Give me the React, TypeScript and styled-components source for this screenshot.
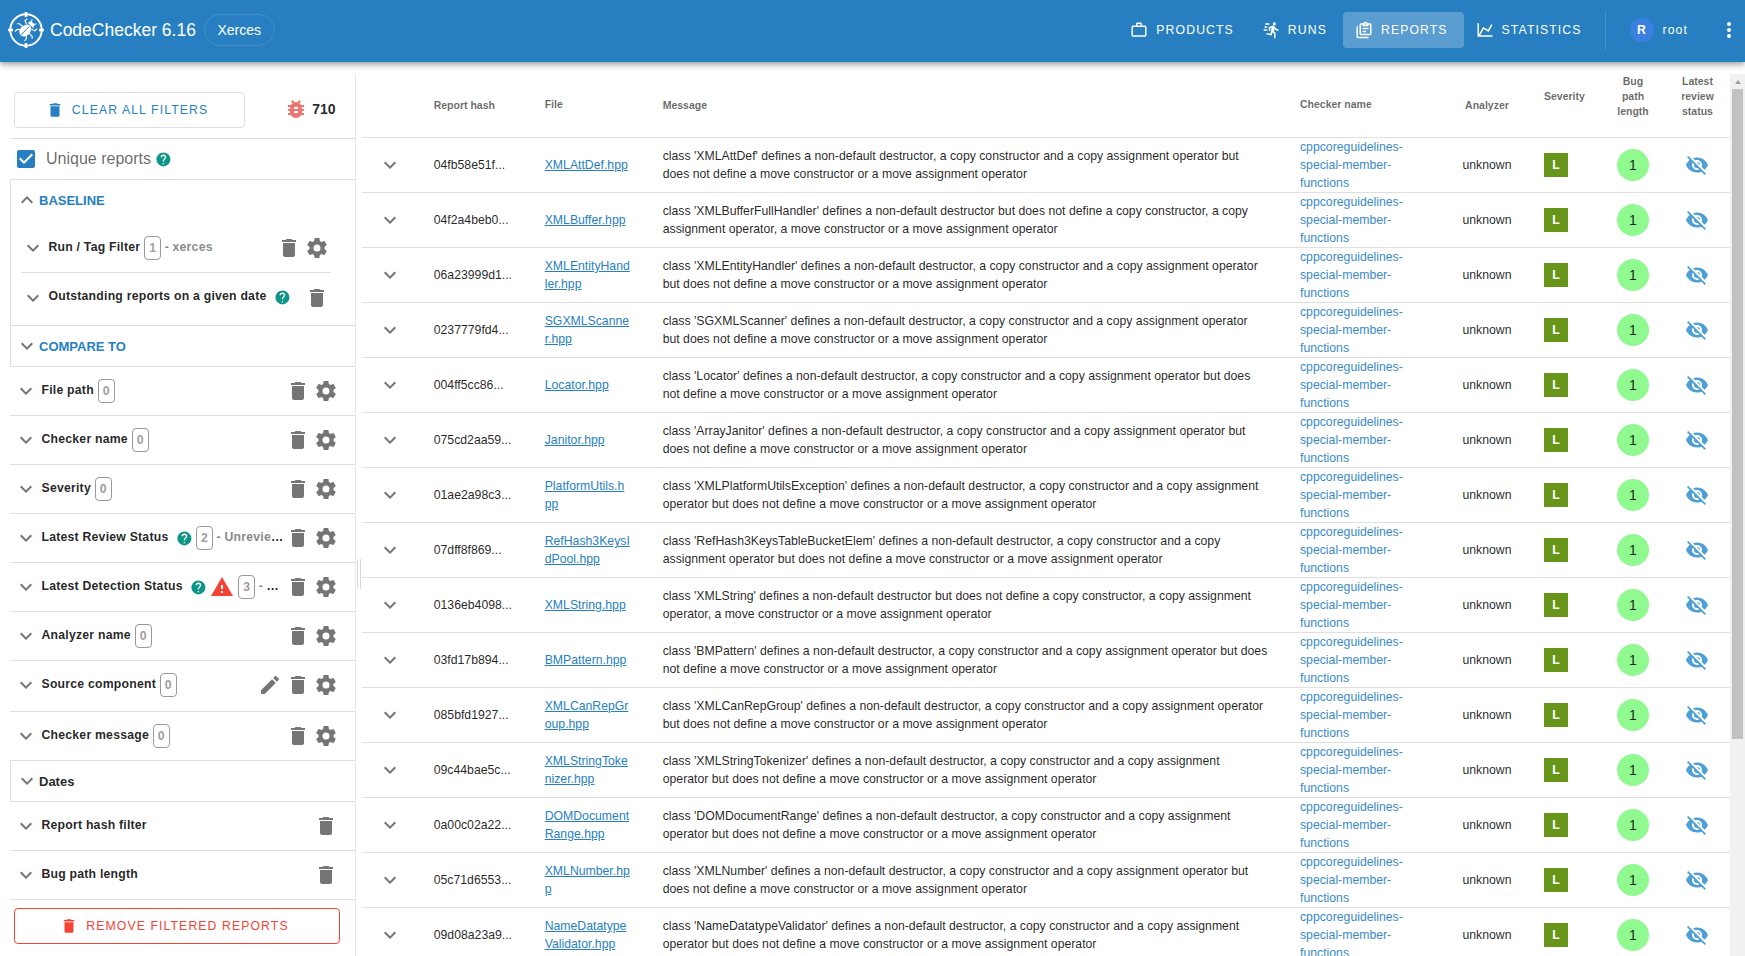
import React from 'react';
import styled, { createGlobalStyle } from 'styled-components';

const color = {
  primary: '#277fc1',
  error: '#f44336',
  teal: '#0d9687',
  line: '#e0e0e0',
  icon: '#757575',
  text: 'rgba(0, 0, 0, 0.87)',
};

const paths = {
  trash: 'M19,4H15.5L14.5,3H9.5L8.5,4H5V6H19M6,19A2,2 0 0,0 8,21H16A2,2 0 0,0 18,19V7H6V19Z',
  cog: 'M12,15.5A3.5,3.5 0 0,1 8.5,12A3.5,3.5 0 0,1 12,8.5A3.5,3.5 0 0,1 15.5,12A3.5,3.5 0 0,1 12,15.5M19.43,12.97C19.47,12.65 19.5,12.33 19.5,12C19.5,11.67 19.47,11.34 19.43,11L21.54,9.37C21.73,9.22 21.78,8.95 21.66,8.73L19.66,5.27C19.54,5.05 19.27,4.96 19.05,5.05L16.56,6.05C16.04,5.66 15.5,5.32 14.87,5.07L14.5,2.42C14.46,2.18 14.25,2 14,2H10C9.75,2 9.54,2.18 9.5,2.42L9.13,5.07C8.5,5.32 7.96,5.66 7.44,6.05L4.95,5.05C4.73,4.96 4.46,5.05 4.34,5.27L2.34,8.73C2.21,8.95 2.27,9.22 2.46,9.37L4.57,11C4.53,11.34 4.5,11.67 4.5,12C4.5,12.33 4.53,12.65 4.57,12.97L2.46,14.63C2.27,14.78 2.21,15.05 2.34,15.27L4.34,18.73C4.46,18.95 4.73,19.03 4.95,18.95L7.44,17.94C7.96,18.34 8.5,18.68 9.13,18.93L9.5,21.58C9.54,21.82 9.75,22 10,22H14C14.25,22 14.46,21.82 14.5,21.58L14.87,18.93C15.5,18.67 16.04,18.34 16.56,17.94L19.05,18.95C19.27,19.03 19.54,18.95 19.66,18.73L21.66,15.27C21.78,15.05 21.73,14.78 21.54,14.63L19.43,12.97Z',
  down: 'M7.41,8.58L12,13.17L16.59,8.58L18,10L12,16L6,10L7.41,8.58Z',
  up: 'M7.41,15.41L12,10.83L16.59,15.41L18,14L12,8L6,14L7.41,15.41Z',
  help: 'M15.07,11.25L14.17,12.17C13.45,12.89 13,13.5 13,15H11V14.5C11,13.39 11.45,12.39 12.17,11.67L13.41,10.41C13.78,10.05 14,9.55 14,9C14,7.89 13.1,7 12,7A2,2 0 0,0 10,9H8A4,4 0 0,1 12,5A4,4 0 0,1 16,9C16,9.88 15.64,10.67 15.07,11.25M13,19H11V17H13M12,2A10,10 0 0,0 2,12A10,10 0 0,0 12,22A10,10 0 0,0 22,12C22,6.47 17.5,2 12,2Z',
  alert: 'M13,14H11V10H13M13,18H11V16H13M1,21H23L12,2L1,21Z',
  bug: 'M14,12H10V10H14M14,16H10V14H14M20,8H17.19C16.74,7.22 16.12,6.55 15.37,6.04L17,4.41L15.59,3L13.42,5.17C12.96,5.06 12.5,5 12,5C11.5,5 11.04,5.06 10.59,5.17L8.41,3L7,4.41L8.62,6.04C7.88,6.55 7.26,7.22 6.81,8H4V10H6.09C6.04,10.33 6,10.66 6,11V12H4V14H6V15C6,15.34 6.04,15.67 6.09,16H4V18H6.81C7.85,19.79 9.78,21 12,21C14.22,21 16.15,19.79 17.19,18H20V16H17.91C17.96,15.67 18,15.34 18,15V14H20V12H18V11C18,10.66 17.96,10.33 17.91,10H20V8Z',
  checkbox: 'M10,17L5,12L6.41,10.58L10,14.17L17.59,6.58L19,8M19,3H5C3.89,3 3,3.89 3,5V19A2,2 0 0,0 5,21H19A2,2 0 0,0 21,19V5C21,3.89 20.1,3 19,3Z',
  pencil: 'M20.71,7.04C21.1,6.65 21.1,6 20.71,5.63L18.37,3.29C18,2.9 17.35,2.9 16.96,3.29L15.12,5.12L18.87,8.87M3,17.25V21H6.75L17.81,9.93L14.06,6.18L3,17.25Z',
  eyeOff: 'M11.83,9L15,12.16C15,12.11 15,12.05 15,12A3,3 0 0,0 12,9C11.94,9 11.89,9 11.83,9M7.53,9.8L9.08,11.35C9.03,11.56 9,11.77 9,12A3,3 0 0,0 12,15C12.22,15 12.44,14.97 12.65,14.92L14.2,16.47C13.53,16.8 12.79,17 12,17A5,5 0 0,1 7,12C7,11.21 7.2,10.47 7.53,9.8M2,4.27L4.28,6.55L4.73,7C3.08,8.3 1.78,10 1,12C2.73,16.39 7,19.5 12,19.5C13.55,19.5 15.03,19.2 16.38,18.66L16.81,19.08L19.73,22L21,20.73L3.27,3M12,7A5,5 0 0,1 17,12C17,12.64 16.87,13.26 16.64,13.82L19.57,16.75C21.07,15.5 22.27,13.86 23,12C21.27,7.61 17,4.5 12,4.5C10.6,4.5 9.26,4.75 8,5.2L10.17,7.35C10.74,7.13 11.35,7 12,7Z',
  briefcase: 'M20,6C20.58,6 21.05,6.2 21.42,6.59C21.8,7 22,7.45 22,8V19C22,19.55 21.8,20 21.42,20.41C21.05,20.8 20.58,21 20,21H4C3.42,21 2.95,20.8 2.58,20.41C2.2,20 2,19.55 2,19V8C2,7.45 2.2,7 2.58,6.59C2.95,6.2 3.42,6 4,6H8V4C8,3.42 8.2,2.95 8.58,2.58C8.95,2.2 9.42,2 10,2H14C14.58,2 15.05,2.2 15.42,2.58C15.8,2.95 16,3.42 16,4V6H20M4,8V19H20V8H4M14,6V4H10V6H14Z',
  run: 'M16.5,5.5A2,2 0 0,0 18.5,3.5A2,2 0 0,0 16.5,1.5A2,2 0 0,0 14.5,3.5A2,2 0 0,0 16.5,5.5M12.9,19.4L13.9,15L16,17V23H18V15.5L15.9,13.5L16.5,10.5C17.89,12.09 19.89,13 22,13V11C20.24,11.03 18.6,10.11 17.7,8.6L16.7,7C16.34,6.4 15.7,6 15,6C14.7,6 14.5,6.1 14.2,6.1L9,8.3V13H11V9.6L12.8,8.9L11.2,17L6.3,16L5.9,18L12.9,19.4M4,9A1,1 0 0,1 3,8A1,1 0 0,1 4,7H7V9H4M5,5A1,1 0 0,1 4,4A1,1 0 0,1 5,3H10V5H5M3,13A1,1 0 0,1 2,12A1,1 0 0,1 3,11H7V13H3Z',
  clipboards: 'M4,7V21H18V23H4C2.9,23 2,22.1 2,21V7H4M20,3C21.1,3 22,3.9 22,5V17C22,18.1 21.1,19 20,19H8C6.9,19 6,18.1 6,17V5C6,3.9 6.9,3 8,3H11.18C11.6,1.84 12.7,1 14,1C15.3,1 16.4,1.84 16.82,3H20M14,3C13.45,3 13,3.45 13,4C13,4.55 13.45,5 14,5C14.55,5 15,4.55 15,4C15,3.45 14.55,3 14,3M10,7V5H8V17H20V5H18V7H10M15,15H10V13H15V15M18,11H10V9H18V11Z',
  chart: 'M16,11.78L20.24,4.45L21.97,5.45L16.74,14.5L10.23,10.75L5.46,19H22V21H2V3H4V17.54L9.5,8L16,11.78Z',
  dots: 'M12,16A2,2 0 0,1 14,18A2,2 0 0,1 12,20A2,2 0 0,1 10,18A2,2 0 0,1 12,16M12,10A2,2 0 0,1 14,12A2,2 0 0,1 12,14A2,2 0 0,1 10,12A2,2 0 0,1 12,10M12,4A2,2 0 0,1 14,6A2,2 0 0,1 12,8A2,2 0 0,1 10,6A2,2 0 0,1 12,4Z',
};

type IconName = keyof typeof paths;

const Svg = styled.svg<{ $size: number; $color: string }>`
  width: ${(p) => p.$size}px;
  height: ${(p) => p.$size}px;
  fill: ${(p) => p.$color};
  flex: none;
  display: block;
`;

const Icon = ({ name, size = 24, tint = color.icon }: { name: IconName; size?: number; tint?: string }) => (
  <Svg viewBox="0 0 24 24" $size={size} $color={tint}>
    <path d={paths[name]} />
  </Svg>
);

const Global = createGlobalStyle`
  *, *::before, *::after { box-sizing: border-box; }
  body {
    margin: 0;
    overflow: hidden;
    background: #fff;
    color: ${color.text};
    font-family: "Liberation Sans", Arial, sans-serif;
    font-size: 14px;
  }
`;

const Page = styled.div`
  display: flex;
  flex-direction: column;
  height: 956px;
`;

/* ---------- top bar ---------- */

const TopBar = styled.header`
  display: flex;
  align-items: center;
  flex: none;
  height: 62px;
  padding: 0 4px 2px 8px;
  color: #fff;
  background: ${color.primary};
  box-shadow: 0 2px 4px -1px rgba(0, 0, 0, 0.2), 0 4px 5px 0 rgba(0, 0, 0, 0.14), 0 1px 10px 0 rgba(0, 0, 0, 0.12);
  z-index: 1;
`;

const Title = styled.div`
  margin-left: 6px;
  font-size: 17.5px;
  white-space: nowrap;
`;

const ProductChip = styled.div`
  display: flex;
  align-items: center;
  height: 32px;
  margin-left: 8px;
  padding: 0 12.5px;
  border: 1px solid rgba(255, 255, 255, 0.12);
  border-radius: 16px;
  font-size: 14px;
`;

const Nav = styled.nav`
  display: flex;
  margin-left: auto;
`;

const NavButton = styled.a<{ $active?: boolean }>`
  display: flex;
  align-items: center;
  gap: 8px;
  height: 36px;
  padding: 0 16px 0 12px;
  border-radius: 4px;
  background: ${(p) => (p.$active ? 'rgba(255, 255, 255, 0.24)' : 'transparent')};
  font-size: 12.25px;
  letter-spacing: 0.0892857em;
`;

const BarDivider = styled.div`
  width: 1px;
  height: 40px;
  margin-left: 7px;
  background: rgba(255, 255, 255, 0.14);
`;

const User = styled.div`
  display: flex;
  align-items: center;
  gap: 9px;
  margin: 0 29px 0 24px;
  font-size: 12.25px;
  letter-spacing: 0.0892857em;
`;

const Avatar = styled.div`
  display: flex;
  align-items: center;
  justify-content: center;
  width: 24px;
  height: 24px;
  border-radius: 50%;
  background: #3a80e0;
  font-weight: 700;
  letter-spacing: 0;
`;

const LogoSvg = styled.svg`
  width: 36px;
  height: 36px;
  flex: none;
`;

const Logo = () => (
  <LogoSvg viewBox="0 0 36 36" fill="none" stroke="#fff">
    <circle cx="18" cy="18" r="15.7" strokeWidth="2" />
    <path d="M18 0V5M18 31V36M0 18H5M31 18H36" strokeWidth="2.6" />
    <g transform="translate(-0.3 0.2) rotate(45 18 18) scale(0.88) translate(2.4 1.6)">
      <path d="M14 13.5L10 12V8.5M12.5 18.5H8L6 20.5M13.5 22.5L10.5 25V28.5M22 13.5L26 12V8.5M23.5 18.5H28L30 20.5M22.5 22.5L25.5 25V28.5M16.3 8.5L14.5 5M19.7 8.5L21.5 5" strokeWidth="1.3" />
      <ellipse cx="18" cy="19.5" rx="5.8" ry="7.6" fill="#fff" stroke="none" />
      <path d="M13.8 11.2A4.2 4.2 0 0 1 22.2 11.2Z" fill="#fff" stroke="none" />
      <path d="M18 13V27" stroke={color.primary} strokeWidth="1" />
    </g>
  </LogoSvg>
);

/* ---------- filter panel ---------- */

const Body = styled.div`
  display: flex;
  flex: 1;
  min-height: 0;
  padding-top: 12px;
`;

const Sidebar = styled.aside`
  width: 356px;
  flex: none;
  padding-left: 10px;
  border-right: 1px solid #e8e8e8;
`;

const ClearBar = styled.div`
  display: flex;
  align-items: center;
  height: 65px;
  padding: 7px 19.5px 0 4px;
  border-bottom: 1px solid ${color.line};
`;

const OutlinedButton = styled.button<{ $danger?: boolean }>`
  display: flex;
  align-items: center;
  justify-content: center;
  gap: 8px;
  width: ${(p) => (p.$danger ? 326 : 231)}px;
  height: 36px;
  margin: ${(p) => (p.$danger ? '8px 0 0 4px' : '0')};
  padding: 0 5px 0 0;
  border: 1px solid ${(p) => (p.$danger ? color.error : color.line)};
  border-radius: 4px;
  background: #fff;
  color: ${(p) => (p.$danger ? color.error : color.primary)};
  font: 12.25px "Liberation Sans", Arial, sans-serif;
  letter-spacing: 0.0892857em;
`;

const ReportCount = styled.div`
  display: flex;
  align-items: center;
  gap: 4px;
  margin-left: auto;
  padding-bottom: 2px;
  font-weight: 700;
`;

const UniqueRow = styled.div`
  display: flex;
  align-items: center;
  height: 41px;
  padding-left: 4px;
  border-bottom: 1px solid ${color.line};
  font-size: 16px;
  color: rgba(0, 0, 0, 0.6);
`;

const UniqueLabel = styled.span`
  margin: 0 4.2px 0 8px;
`;

const Group = styled.section<{ $height: number }>`
  height: ${(p) => p.$height}px;
  border-left: 1px solid ${color.line};
  border-bottom: 1px solid ${color.line};
`;

const GroupHeader = styled.div<{ $dark?: boolean }>`
  display: flex;
  align-items: center;
  height: 40px;
  padding-left: 4px;
  font-size: 13px;
  font-weight: 700;
  color: ${(p) => (p.$dark ? color.text : color.primary)};
`;

const FilterRow = styled.div<{ $height?: number; $nested?: boolean; $last?: boolean; $shift?: number }>`
  display: flex;
  align-items: center;
  height: ${(p) => p.$height ?? 49}px;
  margin: ${(p) => (p.$nested ? '0 24px 0 10px' : '0')};
  padding: ${(p) => (p.$nested ? '0 2.5px 0 0' : '0 17.5px 0 4px')};
  padding-top: ${(p) => Math.max(p.$shift ?? 0, 0) * 2}px;
  padding-bottom: ${(p) => Math.max(-(p.$shift ?? 0), 0) * 2}px;
  border-bottom: ${(p) => (p.$last ? 'none' : `1px solid ${color.line}`)};
`;

const FilterTitle = styled.div`
  display: flex;
  align-items: center;
  margin-left: 3.5px;
  font-size: 12.25px;
  font-weight: 700;
  letter-spacing: 0.0178571em;
  white-space: nowrap;
`;

const FilterName = styled.span`
  padding-bottom: 2px;
`;

const Badge = styled.span`
  display: flex;
  align-items: center;
  justify-content: center;
  width: 16.8px;
  height: 24px;
  margin-left: 4px;
  border: 1px solid #999;
  border-radius: 4px;
  color: #9e9e9e;
`;

const Selected = styled.span`
  margin-left: 3.6px;
  padding-bottom: 2px;
  color: #8b8b8b;
`;

const Ellipsis = styled.span`
  color: ${color.text};
`;

const HelpSlot = styled.span<{ $right: number }>`
  margin: 0 ${(p) => p.$right}px 0 7.8px;
`;

const Actions = styled.div`
  display: flex;
  gap: 3.7px;
  margin-left: auto;
`;

/* ---------- splitter ---------- */

const Splitter = styled.div`
  width: 6px;
  flex: none;
  padding: 485px 1px 0;
`;

const Handle = styled.div`
  width: 4px;
  height: 30px;
  border: solid #d8d8d8;
  border-width: 0 1px;
`;

/* ---------- report table ---------- */

const Table = styled.main`
  flex: 1;
  min-width: 0;
  overflow: hidden;
`;

const Row = styled.div<{ $head?: boolean }>`
  display: grid;
  grid-template-columns: 71.7px 111px 118px 637.3px 144px 86px 70px 66px 64px;
  align-items: center;
  height: ${(p) => (p.$head ? 64 : 55)}px;
  border-bottom: 1px solid ${color.line};
  font-size: ${(p) => (p.$head ? 10.5 : 12.25)}px;
  line-height: ${(p) => (p.$head ? 15 : 18)}px;
  font-weight: ${(p) => (p.$head ? 700 : 400)};
  color: ${(p) => (p.$head ? 'rgba(0, 0, 0, 0.6)' : color.text)};
  white-space: nowrap;
`;

const Cell = styled.div<{ $center?: boolean; $left?: number; $right?: number; $up?: number }>`
  display: ${(p) => (p.$center ? 'flex' : 'block')};
  justify-content: center;
  text-align: ${(p) => (p.$center ? 'center' : 'left')};
  padding: ${(p) => `0 ${p.$right ?? 0}px ${p.$up ?? 0}px ${p.$left ?? 0}px`};
`;

const FileLink = styled.a`
  color: ${color.primary};
  text-decoration: underline;
`;

const CheckerLink = styled.a`
  color: #3a8ac7;
`;

const Severity = styled.span`
  display: flex;
  align-items: center;
  justify-content: center;
  width: 24px;
  height: 24px;
  padding-bottom: 1px;
  background: #679519;
  color: #fff;
  font-weight: 700;
`;

const PathLength = styled.span`
  display: flex;
  align-items: center;
  justify-content: center;
  width: 32px;
  height: 32px;
  border-radius: 50%;
  background: #90f990;
  font-size: 14px;
`;

const Scrollbar = styled.div`
  display: flex;
  flex-direction: column;
  align-items: center;
  width: 15px;
  flex: none;
  padding-top: 6px;
  background: #f1f1f1;
`;

const ScrollArrow = styled.div`
  border: 3.5px solid transparent;
  border-top-width: 0;
  border-bottom: 4px solid #a0a0a0;
`;

const Thumb = styled.div`
  width: 11px;
  height: 650px;
  margin-top: 5px;
  background: #c1c1c1;
`;

const reports: [string, string[], string, string][] = [
  ['04fb58e51f...', ['XMLAttDef.hpp'], "class 'XMLAttDef' defines a non-default destructor, a copy constructor and a copy assignment operator but", 'does not define a move constructor or a move assignment operator'],
  ['04f2a4beb0...', ['XMLBuffer.hpp'], "class 'XMLBufferFullHandler' defines a non-default destructor but does not define a copy constructor, a copy", 'assignment operator, a move constructor or a move assignment operator'],
  ['06a23999d1...', ['XMLEntityHand', 'ler.hpp'], "class 'XMLEntityHandler' defines a non-default destructor, a copy constructor and a copy assignment operator", 'but does not define a move constructor or a move assignment operator'],
  ['0237779fd4...', ['SGXMLScanne', 'r.hpp'], "class 'SGXMLScanner' defines a non-default destructor, a copy constructor and a copy assignment operator", 'but does not define a move constructor or a move assignment operator'],
  ['004ff5cc86...', ['Locator.hpp'], "class 'Locator' defines a non-default destructor, a copy constructor and a copy assignment operator but does", 'not define a move constructor or a move assignment operator'],
  ['075cd2aa59...', ['Janitor.hpp'], "class 'ArrayJanitor' defines a non-default destructor, a copy constructor and a copy assignment operator but", 'does not define a move constructor or a move assignment operator'],
  ['01ae2a98c3...', ['PlatformUtils.h', 'pp'], "class 'XMLPlatformUtilsException' defines a non-default destructor, a copy constructor and a copy assignment", 'operator but does not define a move constructor or a move assignment operator'],
  ['07dff8f869...', ['RefHash3KeysI', 'dPool.hpp'], "class 'RefHash3KeysTableBucketElem' defines a non-default destructor, a copy constructor and a copy", 'assignment operator but does not define a move constructor or a move assignment operator'],
  ['0136eb4098...', ['XMLString.hpp'], "class 'XMLString' defines a non-default destructor but does not define a copy constructor, a copy assignment", 'operator, a move constructor or a move assignment operator'],
  ['03fd17b894...', ['BMPattern.hpp'], "class 'BMPattern' defines a non-default destructor, a copy constructor and a copy assignment operator but does", 'not define a move constructor or a move assignment operator'],
  ['085bfd1927...', ['XMLCanRepGr', 'oup.hpp'], "class 'XMLCanRepGroup' defines a non-default destructor, a copy constructor and a copy assignment operator", 'but does not define a move constructor or a move assignment operator'],
  ['09c44bae5c...', ['XMLStringToke', 'nizer.hpp'], "class 'XMLStringTokenizer' defines a non-default destructor, a copy constructor and a copy assignment", 'operator but does not define a move constructor or a move assignment operator'],
  ['0a00c02a22...', ['DOMDocument', 'Range.hpp'], "class 'DOMDocumentRange' defines a non-default destructor, a copy constructor and a copy assignment", 'operator but does not define a move constructor or a move assignment operator'],
  ['05c71d6553...', ['XMLNumber.hp', 'p'], "class 'XMLNumber' defines a non-default destructor, a copy constructor and a copy assignment operator but", 'does not define a move constructor or a move assignment operator'],
  ['09d08a23a9...', ['NameDatatype', 'Validator.hpp'], "class 'NameDatatypeValidator' defines a non-default destructor, a copy constructor and a copy assignment", 'operator but does not define a move constructor or a move assignment operator'],
];

const Lines = ({ items }: { items: string[] }) => (
  <>
    {items.map((text, i) => (
      <React.Fragment key={text}>
        {i > 0 && <br />}
        {text}
      </React.Fragment>
    ))}
  </>
);

interface FilterProps {
  name: string;
  count?: number;
  selected?: string;
  truncated?: boolean;
  help?: boolean;
  warning?: boolean;
  edit?: boolean;
  settings?: boolean;
  height?: number;
  shift?: number;
  nested?: boolean;
  last?: boolean;
}

const Filter = ({ name, count, selected, truncated, help, warning, edit, settings = true, height, shift, nested, last }: FilterProps) => (
  <FilterRow $height={height} $nested={nested} $last={last} $shift={shift}>
    <Icon name="down" />
    <FilterTitle>
      <FilterName>{name}</FilterName>
      {help && (
        <HelpSlot $right={warning ? 3 : -0.8}>
          <Icon name="help" size={16.8} tint={color.teal} />
        </HelpSlot>
      )}
      {warning && <Icon name="alert" tint={color.error} />}
      {count !== undefined && <Badge>{count}</Badge>}
      {selected && (
        <Selected>
          {selected}
          {truncated && <Ellipsis>…</Ellipsis>}
        </Selected>
      )}
    </FilterTitle>
    <Actions>
      {edit && <Icon name="pencil" />}
      <Icon name="trash" />
      {settings && <Icon name="cog" />}
    </Actions>
  </FilterRow>
);

export default function App() {
  return (
    <Page>
      <Global />
      <TopBar>
        <Logo />
        <Title>CodeChecker 6.16</Title>
        <ProductChip>Xerces</ProductChip>
        <Nav>
          <NavButton><Icon name="briefcase" size={18} tint="#fff" />PRODUCTS</NavButton>
          <NavButton><Icon name="run" size={18} tint="#fff" />RUNS</NavButton>
          <NavButton $active><Icon name="clipboards" size={18} tint="#fff" />REPORTS</NavButton>
          <NavButton><Icon name="chart" size={18} tint="#fff" />STATISTICS</NavButton>
        </Nav>
        <BarDivider />
        <User><Avatar>R</Avatar>root</User>
        <Icon name="dots" tint="#fff" />
      </TopBar>

      <Body>
        <Sidebar>
          <ClearBar>
            <OutlinedButton><Icon name="trash" size={18} tint={color.primary} />CLEAR ALL FILTERS</OutlinedButton>
            <ReportCount><Icon name="bug" tint="#ed7672" />710</ReportCount>
          </ClearBar>
          <UniqueRow>
            <Icon name="checkbox" tint={color.primary} />
            <UniqueLabel>Unique reports</UniqueLabel>
            <Icon name="help" size={16.8} tint={color.teal} />
          </UniqueRow>

          <Group $height={146}>
            <GroupHeader><Icon name="up" />BASELINE</GroupHeader>
            <Filter name="Run / Tag Filter" count={1} selected="- xerces" nested height={53} shift={2} />
            <Filter name="Outstanding reports on a given date" help settings={false} nested last />
          </Group>
          <Group $height={41}>
            <GroupHeader><Icon name="down" />COMPARE TO</GroupHeader>
          </Group>

          <Filter name="File path" count={0} />
          <Filter name="Checker name" count={0} />
          <Filter name="Severity" count={0} />
          <Filter name="Latest Review Status" help count={2} selected="- Unrevie" truncated />
          <Filter name="Latest Detection Status" help warning count={3} selected="- " truncated />
          <Filter name="Analyzer name" count={0} />
          <Filter name="Source component" count={0} edit height={51} shift={-1} />
          <Filter name="Checker message" count={0} />
          <Group $height={41}>
            <GroupHeader $dark><Icon name="down" />Dates</GroupHeader>
          </Group>
          <Filter name="Report hash filter" settings={false} />
          <Filter name="Bug path length" settings={false} />

          <OutlinedButton $danger><Icon name="trash" size={18} tint={color.error} />REMOVE FILTERED REPORTS</OutlinedButton>
        </Sidebar>

        <Splitter><Handle /></Splitter>

        <Table>
          <Row $head>
            <Cell />
            <Cell $up={1}>Report hash</Cell>
            <Cell $up={2}>File</Cell>
            <Cell $up={1}>Message</Cell>
            <Cell $up={2}>Checker name</Cell>
            <Cell $center>Analyzer</Cell>
            <Cell $left={14} $up={18}>Severity</Cell>
            <Cell $center $up={18}><Lines items={['Bug', 'path', 'length']} /></Cell>
            <Cell $center $up={18} $right={1}><Lines items={['Latest', 'review', 'status']} /></Cell>
          </Row>
          {reports.map(([hash, file, first, second]) => (
            <Row key={hash}>
              <Cell $left={15.5}><Icon name="down" /></Cell>
              <Cell>{hash}</Cell>
              <Cell><FileLink><Lines items={file} /></FileLink></Cell>
              <Cell>{first}<br />{second}</Cell>
              <Cell><CheckerLink>cppcoreguidelines-<br />special-member-<br />functions</CheckerLink></Cell>
              <Cell $center>unknown</Cell>
              <Cell $left={14}><Severity>L</Severity></Cell>
              <Cell $center><PathLength>1</PathLength></Cell>
              <Cell $center $right={1}><Icon name="eyeOff" tint="#4d9fd6" /></Cell>
            </Row>
          ))}
        </Table>

        <Scrollbar>
          <ScrollArrow />
          <Thumb />
        </Scrollbar>
      </Body>
    </Page>
  );
}
